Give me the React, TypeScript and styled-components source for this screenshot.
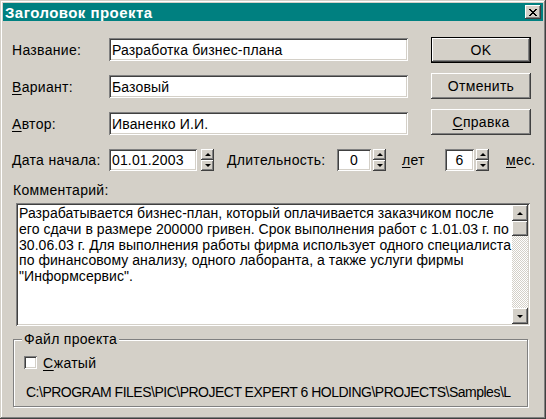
import React from "react";
import styled, { createGlobalStyle, css } from "styled-components";

const GlobalStyle = createGlobalStyle`
  html, body {
    margin: 0;
    padding: 0;
    background: #d4d0c8;
  }
  body {
    font-family: "Liberation Sans", Arial, sans-serif;
    font-size: 14px;
    letter-spacing: 0.3px;
    color: #000;
  }
`;

const raised = css`
  box-shadow: inset -1px -1px #404040, inset 1px 1px #ffffff,
    inset -2px -2px #808080, inset 2px 2px #d4d0c8;
`;

const sunken = css`
  box-shadow: inset 1px 1px #808080, inset -1px -1px #ffffff,
    inset 2px 2px #404040, inset -2px -2px #d4d0c8;
`;

const Window = styled.div`
  box-sizing: border-box;
  width: 546px;
  height: 419px;
  padding: 3px;
  background: #d4d0c8;
  box-shadow: inset -1px -1px #404040, inset 1px 1px #d4d0c8,
    inset -2px -2px #808080, inset 2px 2px #ffffff;
  display: flex;
  flex-direction: column;
`;

const TitleBar = styled.div`
  height: 18px;
  background: #008080;
  display: flex;
  align-items: center;
  justify-content: space-between;
  padding: 0 2px;
`;

const Title = styled.span`
  color: #fff;
  font-weight: bold;
  font-size: 15px;
  letter-spacing: 0.45px;
`;

const CloseButton = styled.div`
  width: 16px;
  height: 14px;
  background: #d4d0c8;
  ${raised};
  display: flex;
  align-items: center;
  justify-content: center;
`;

const Body = styled.div`
  padding: 16px 0 0 9px;
  display: flex;
  flex-direction: column;
`;

const TopSection = styled.div`
  display: flex;
  gap: 23px;
`;

const Fields = styled.div`
  display: grid;
  grid-template-columns: 97px 299px;
  grid-auto-rows: 23px;
  row-gap: 14px;
  align-items: center;
  margin-top: 1px;
`;

const Label = styled.span`
  white-space: nowrap;
`;

const Key = styled.span`
  text-decoration: underline;
  text-underline-offset: 2px;
`;

const TextBox = styled.div<{ $width?: number; $center?: boolean }>`
  box-sizing: border-box;
  height: 100%;
  width: ${(p) => (p.$width ? `${p.$width}px` : "100%")};
  background: #fff;
  ${sunken};
  display: flex;
  align-items: center;
  justify-content: ${(p) => (p.$center ? "center" : "flex-start")};
  padding: 0 3px;
  letter-spacing: 0.15px;
  white-space: nowrap;
  overflow: hidden;
`;

const Buttons = styled.div`
  display: flex;
  flex-direction: column;
  gap: 10px;
  width: 100px;
`;

const Button = styled.div<{ $default?: boolean }>`
  box-sizing: border-box;
  height: 26px;
  display: flex;
  align-items: center;
  justify-content: center;
  background: #d4d0c8;
  ${(p) =>
    p.$default
      ? css`
          border: 1px solid #000;
          ${raised};
        `
      : raised};
`;

const DateRow = styled.div`
  display: flex;
  align-items: center;
  height: 22px;
  margin-top: 14px;
`;

const InlineLabel = styled.span<{ $width: number; $offset?: number }>`
  width: ${(p) => p.$width}px;
  margin-left: ${(p) => p.$offset ?? 0}px;
  white-space: nowrap;
`;

const Spin = styled.div<{ $gap: number }>`
  display: flex;
  flex-direction: column;
  width: 13px;
  height: 22px;
  margin-left: ${(p) => p.$gap}px;
`;

const SpinHalf = styled.div`
  flex: 1;
  background: #d4d0c8;
  ${raised};
  display: flex;
  align-items: center;
  justify-content: center;
`;

const Arrow = styled.span<{ $down?: boolean }>`
  width: 0;
  height: 0;
  border-left: 3px solid transparent;
  border-right: 3px solid transparent;
  ${(p) =>
    p.$down
      ? css`
          border-top: 3px solid #000;
        `
      : css`
          border-bottom: 3px solid #000;
        `};
`;

const CommentLabel = styled.div`
  margin: 12px 0 0 1px;
  line-height: 15px;
`;

const Memo = styled.div`
  box-sizing: border-box;
  width: 514px;
  height: 123px;
  margin: 5px 0 0 4px;
  padding: 2px;
  background: #fff;
  ${sunken};
  display: flex;
`;

const MemoText = styled.div`
  flex: 1;
  padding: 1px 0 0 1px;
  line-height: 15.8px;
  letter-spacing: 0.05px;
  white-space: pre;
  overflow: hidden;
`;

const ScrollBar = styled.div`
  width: 16px;
  display: flex;
  flex-direction: column;
`;

const ScrollButton = styled.div`
  height: 16px;
  background: #d4d0c8;
  ${raised};
  display: flex;
  align-items: center;
  justify-content: center;
`;

const ScrollThumb = styled.div`
  height: 15px;
  background: #d4d0c8;
  ${raised};
`;

const ScrollTrack = styled.div`
  flex: 1;
  background-color: #ebe9e4;
  background-image: conic-gradient(#fff 25%, #d4d0c8 0 50%, #fff 0 75%, #d4d0c8 0);
  background-size: 2px 2px;
`;

const GroupBox = styled.fieldset`
  box-sizing: border-box;
  width: 515px;
  height: 75px;
  margin: 6px 0 0 1px;
  padding: 8px 10px 0 11px;
  border: 1px solid #808080;
  box-shadow: inset 1px 1px #fff, 1px 1px #fff;
  min-inline-size: auto;
`;

const Legend = styled.legend`
  margin-left: -3px;
  padding: 0 2px;
  background: #d4d0c8;
  line-height: 15px;
`;

const CheckRow = styled.div`
  display: flex;
  align-items: center;
  gap: 6px;
  height: 15px;
  margin-left: -1px;
`;

const CheckBox = styled.div`
  box-sizing: border-box;
  width: 13px;
  height: 13px;
  background: #fff;
  ${sunken};
`;

const PathText = styled.div`
  margin-top: 14px;
  margin-left: 1px;
  letter-spacing: -0.5px;
  white-space: nowrap;
  overflow: hidden;
`;

const Spinner = ({ gap }: { gap: number }) => (
  <Spin $gap={gap}>
    <SpinHalf>
      <Arrow />
    </SpinHalf>
    <SpinHalf>
      <Arrow $down />
    </SpinHalf>
  </Spin>
);

const memoLines = [
  "Разрабатывается бизнес-план, который оплачивается заказчиком после",
  "его сдачи в размере 200000 гривен. Срок выполнения работ с 1.01.03 г. по",
  "30.06.03 г. Для выполнения работы фирма использует одного специалиста",
  "по финансовому анализу, одного лаборанта, а также услуги фирмы",
  "\"Информсервис\".",
].join("\n");

export default function App() {
  return (
    <>
      <GlobalStyle />
      <Window>
        <TitleBar>
          <Title>Заголовок проекта</Title>
          <CloseButton>
            <svg width="8" height="7" viewBox="0 0 8 7">
              <path d="M0 0h2v1h1v1h2V1h1V0h2v1H7v1H6v1H5v1h1v1h1v1h1v1H6V6H5V5H3v1H2v1H0V6h1V5h1V4h1V3H2V2H1V1H0z" fill="#000" />
            </svg>
          </CloseButton>
        </TitleBar>
        <Body>
          <TopSection>
            <Fields>
              <Label>Название:</Label>
              <TextBox>Разработка бизнес-плана</TextBox>
              <Label>
                <Key>В</Key>ариант:
              </Label>
              <TextBox>Базовый</TextBox>
              <Label>
                <Key>А</Key>втор:
              </Label>
              <TextBox>Иваненко И.И.</TextBox>
            </Fields>
            <Buttons>
              <Button $default>OK</Button>
              <Button>Отменить</Button>
              <Button>
                <span>
                  <Key>С</Key>правка
                </span>
              </Button>
            </Buttons>
          </TopSection>

          <DateRow>
            <InlineLabel $width={97}>Дата начала:</InlineLabel>
            <TextBox $width={88}>01.01.2003</TextBox>
            <Spinner gap={4} />
            <InlineLabel $width={110} $offset={13}>
              Длительность:
            </InlineLabel>
            <TextBox $width={34} $center>
              0
            </TextBox>
            <Spinner gap={2} />
            <InlineLabel $width={43} $offset={16}>
              <Key>л</Key>ет
            </InlineLabel>
            <TextBox $width={29} $center>
              6
            </TextBox>
            <Spinner gap={2} />
            <InlineLabel $width={30} $offset={17}>
              <Key>м</Key>ес.
            </InlineLabel>
          </DateRow>

          <CommentLabel>Комментарий:</CommentLabel>
          <Memo>
            <MemoText>{memoLines}</MemoText>
            <ScrollBar>
              <ScrollButton>
                <Arrow />
              </ScrollButton>
              <ScrollThumb />
              <ScrollTrack />
              <ScrollButton>
                <Arrow $down />
              </ScrollButton>
            </ScrollBar>
          </Memo>

          <GroupBox>
            <Legend>Файл проекта</Legend>
            <CheckRow>
              <CheckBox />
              <span>
                <Key>С</Key>жатый
              </span>
            </CheckRow>
            <PathText>C:\PROGRAM FILES\PIC\PROJECT EXPERT 6 HOLDING\PROJECTS\Samples\L</PathText>
          </GroupBox>
        </Body>
      </Window>
    </>
  );
}
